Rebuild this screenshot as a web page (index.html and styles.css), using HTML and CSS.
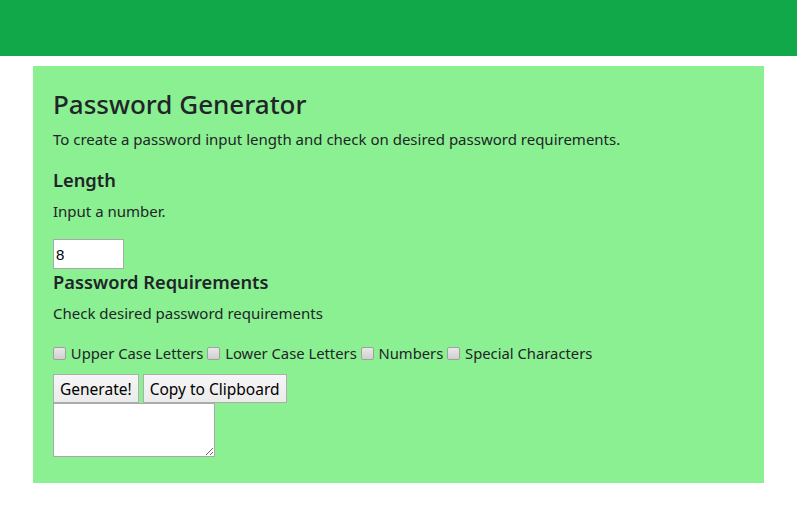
FILE: index.html
```html
<!DOCTYPE html>
<html>
<head>
<meta charset="utf-8">
<link rel="stylesheet" href="styles.css">
</head>
<body>
<header class="topbar"></header>
<main class="card">
  <h1 class="title">Password Generator</h1>
  <p class="lead">To create a password input length and check on desired password requirements.</p>
  <h4 class="section">Length</h4>
  <p class="hint">Input a number.</p>
  <input class="len" type="text" value="8">
  <h4 class="section">Password Requirements</h4>
  <p class="hint">Check desired password requirements</p>
  <div class="checks"><input type="checkbox" class="cb"> Upper Case Letters <input type="checkbox" class="cb"> Lower Case Letters <input type="checkbox" class="cb"> Numbers <input type="checkbox" class="cb"> Special Characters</div>
  <div class="actions"><button class="btn">Generate!</button><button class="btn">Copy to Clipboard</button></div>
  <textarea class="out"></textarea>
</main>
</body>
</html>
```
FILE: styles.css
```css
html, body {
  margin: 0;
  padding: 0;
  background: #ffffff;
}
body {
  font-family: "Noto Sans", "Open Sans", sans-serif;
  font-size: 15px;
  color: #212529;
}
.topbar {
  display: block;
  height: 56px;
  background: #11a84a;
}
.card {
  display: block;
  width: 691px;
  margin: 10px auto 0;
  padding: 20px 20px 26px;
  background: #8bf091;
}
.title {
  margin: 0;
  font-size: 26px;
  font-weight: 500;
  line-height: 36px;
}
.lead {
  margin: 5px 0 16px;
  line-height: 24px;
}
.section {
  margin: 0;
  font-size: 18.3px;
  font-weight: 600;
  line-height: 26px;
}
.hint {
  margin: 6px 0 16px;
  line-height: 24px;
}
.len {
  display: block;
  box-sizing: border-box;
  width: 71px;
  height: 30px;
  margin: 0;
  padding: 1px 2px;
  border: 1px solid #a9a9a9;
  background: #fff;
  font-family: "Liberation Sans", Arial, sans-serif;
  font-size: 15px;
  color: #000;
}
.checks {
  line-height: 24px;
  margin-bottom: 9px;
  font-size: 14.8px;
}
.cb {
  appearance: none;
  -webkit-appearance: none;
  width: 13px;
  height: 13px;
  margin: 0 1px 0 0;
  vertical-align: -1px;
  border: 1px solid #a0a0a0;
  border-radius: 2px;
  background: linear-gradient(#e8e8e8, #d0d0d0);
  box-sizing: border-box;
}
.actions {
  display: flex;
  gap: 4px;
}
.btn {
  box-sizing: border-box;
  height: 29px;
  padding: 0 6px;
  border: 1px solid #adadad;
  border-radius: 0;
  background: linear-gradient(#f6f6f6, #ebebeb);
  font-family: "Noto Sans", "Open Sans", sans-serif;
  font-size: 15.5px;
  color: #000;
}
.out {
  display: block;
  box-sizing: border-box;
  width: 162px;
  height: 54px;
  margin: 0;
  border: 1px solid #a9a9a9;
  background: #fff;
}
```
